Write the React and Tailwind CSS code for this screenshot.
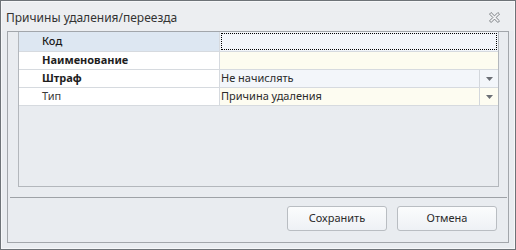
const rows = [
  { label: "Код", bold: false, strong: true, value: "", labelBg: "bg-[#dde7f2]", valueBg: "bg-[#f2f5fa]", focus: true, h: "h-[20px]" },
  { label: "Наименование", bold: true, value: "", labelBg: "bg-white", valueBg: "bg-[#fdfcf0]", h: "h-[18px]" },
  { label: "Штраф", bold: true, value: "Не начислять", labelBg: "bg-white", valueBg: "bg-[#f3f6fa]", combo: true, h: "h-[18px]" },
  { label: "Тип", bold: false, value: "Причина удаления", labelBg: "bg-white", valueBg: "bg-[#fdfcf1]", combo: true, h: "h-[18px]" },
];

const CloseIcon = () => (
  <svg width="11" height="11" viewBox="-0.5 -0.5 11 11">
    <polygon
      points="0,1.6 1.6,0 5,3.4 8.4,0 10,1.6 6.6,5 10,8.4 8.4,10 5,6.6 1.6,10 0,8.4 3.4,5"
      fill="#f4f5f7"
      stroke="#6f7378"
      strokeWidth="0.9"
      strokeLinejoin="round"
    />
  </svg>
);

const Row = ({ row }) => (
  <div className={`flex ${row.h} border-b border-[#d6dadf]`}>
    <div
      className={`w-[201px] ${row.labelBg} border-r border-[#d6dadf] pl-[23px] flex items-center text-[11px] ${
        row.bold ? "font-bold text-[#1e1e1e]" : row.strong ? "font-medium text-[#1a1a1a]" : "text-[#3a3a3a]"
      }`}
    >
      {row.label}
    </div>
    <div className={`flex-1 ${row.valueBg} flex items-stretch relative`}>
      {row.focus && <div className="absolute inset-[1px] border border-dotted border-black" />}
      <div className="flex-1 pl-[1px] flex items-center text-[11px] text-[#2b2b2b]">{row.value}</div>
      {row.combo && (
        <div className="w-[19px] border-l border-[#d3d7dc] flex items-center justify-center">
          <svg width="7" height="4" viewBox="0 0 7 4">
            <polygon points="0,0 7,0 3.5,4" fill="#6b6f75" />
          </svg>
        </div>
      )}
    </div>
  </div>
);

export default function App() {
  return (
    <div
      className="w-[516px] h-[250px] border border-[#6e7378] bg-[#e9ecf0]"
      style={{ fontFamily: '"Noto Sans", "Open Sans", sans-serif' }}
    >
      <div className="h-full border border-[#f6f7f9] flex flex-col">
        <div className="h-[29px] flex items-center justify-between pl-[4px] pr-[14px] pt-[2px] bg-[#eceef1]">
          <span className="text-[12px] text-[#333]">Причины удаления/переезда</span>
          <CloseIcon />
        </div>
        <div className="mx-[5px] h-[212px] border border-[#a2a6ab] flex flex-col">
          <div className="ml-[10px] mr-[9px] h-[155px] border-x border-b border-[#b3b7bc] bg-[#e9ecf0] flex flex-col">
            {rows.map((row) => (
              <Row key={row.label} row={row} />
            ))}
          </div>
          <div className="mt-[10px] ml-[2px] mr-[1px] h-px bg-[#9ea2a7]" />
          <div className="mt-[8px] mr-[11px] flex justify-end gap-[10px]">
            <button className="w-[100px] h-[25px] rounded-[3px] border border-[#b9bdc2] bg-gradient-to-b from-[#fbfcfd] to-[#eef1f5] text-[11px] text-[#2b2b2b]">
              Сохранить
            </button>
            <button className="w-[100px] h-[25px] rounded-[3px] border border-[#b9bdc2] bg-gradient-to-b from-[#fbfcfd] to-[#eef1f5] text-[11px] text-[#2b2b2b]">
              Отмена
            </button>
          </div>
        </div>
      </div>
    </div>
  );
}
